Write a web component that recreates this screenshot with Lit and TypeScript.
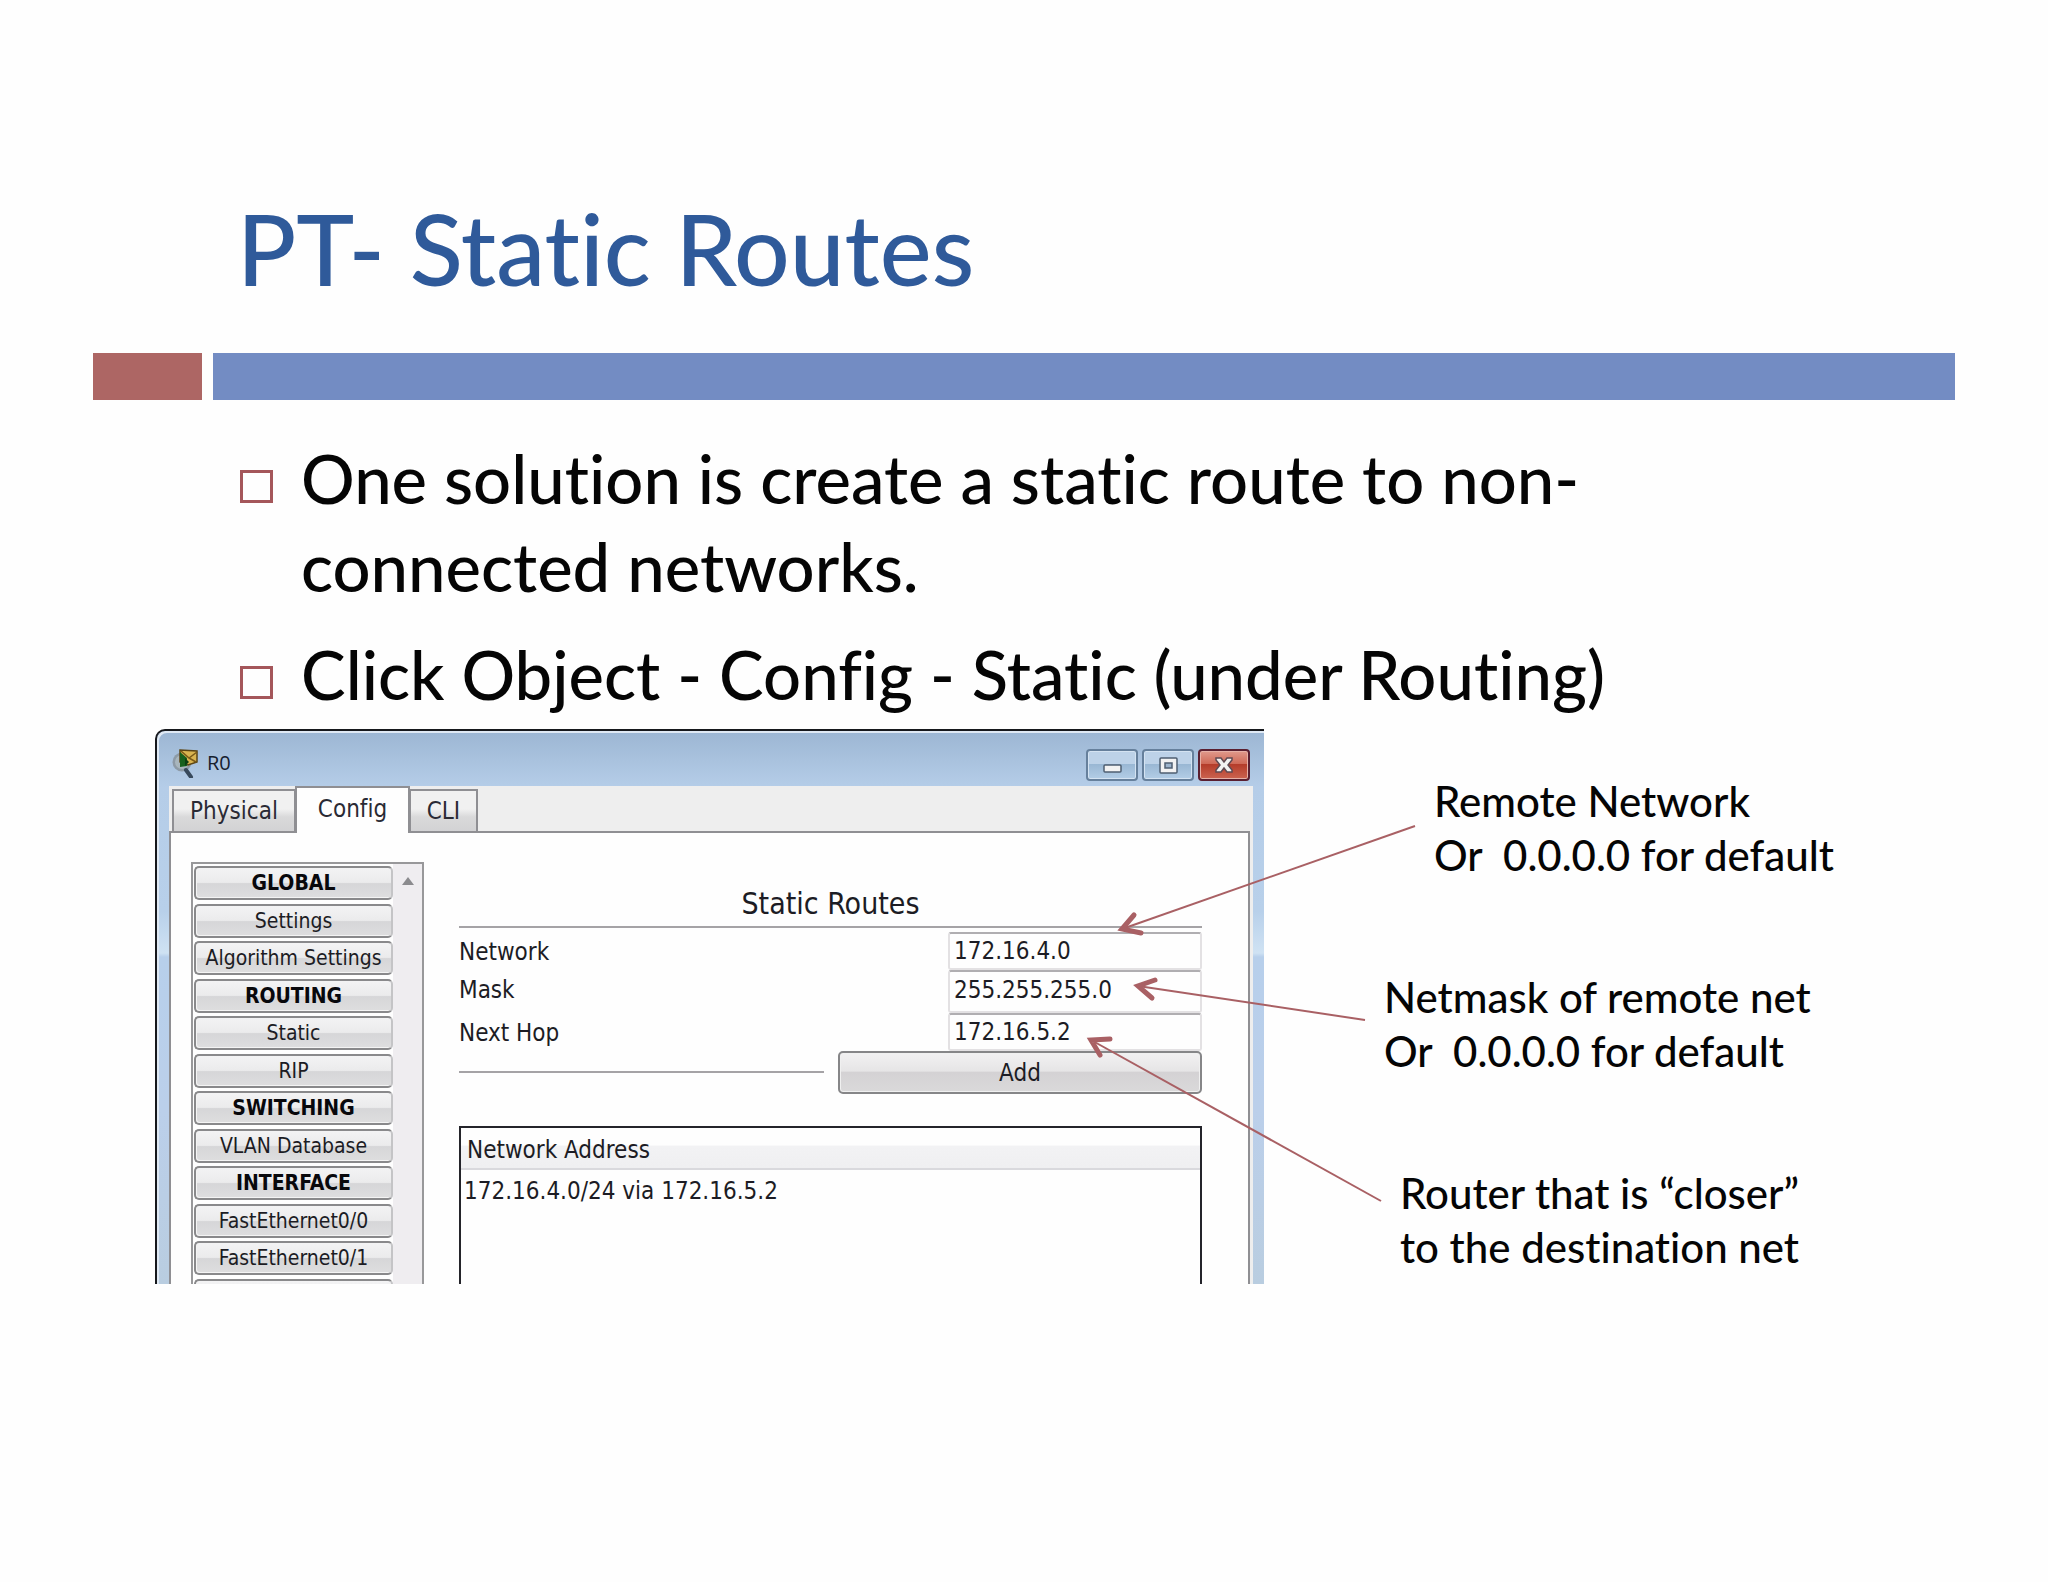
import { LitElement, html, css, svg } from "lit";
import { customElement, state } from "lit/decorators.js";
import { classMap } from "lit/directives/class-map.js";

interface MenuEntry {
  label: string;
  heading?: boolean;
}

const MENU: MenuEntry[] = [
  { label: "GLOBAL", heading: true },
  { label: "Settings" },
  { label: "Algorithm Settings" },
  { label: "ROUTING", heading: true },
  { label: "Static" },
  { label: "RIP" },
  { label: "SWITCHING", heading: true },
  { label: "VLAN Database" },
  { label: "INTERFACE", heading: true },
  { label: "FastEthernet0/0" },
  { label: "FastEthernet0/1" },
  { label: "" },
];

const FIELDS = [
  { id: "network", label: "Network", value: "172.16.4.0" },
  { id: "mask", label: "Mask", value: "255.255.255.0" },
  { id: "next-hop", label: "Next Hop", value: "172.16.5.2" },
];

@customElement("router-window")
export class RouterWindow extends LitElement {
  static styles = css`
    :host {
      display: block;
      min-width: 0;
      font-family: "DejaVu Sans Condensed", "DejaVu Sans", sans-serif;
      font-size: 24px;
      color: #1c1c24;
    }
    * { box-sizing: border-box; }
    button, input { font: inherit; color: inherit; margin: 0; }
    button { padding: 0; }
    .frame {
      height: 100%;
      overflow: hidden;
      display: flex;
      flex-direction: column;
      padding: 0 11px 0 12px;
      border-top: 2px solid #16181c;
      border-left: 2px solid #16181c;
      border-top-left-radius: 10px;
      background: linear-gradient(#9cb6d3 0, #b5cde8 56px, #b8d0ea 180px, #cfe2f3 222px, #b7cfeb 226px, #bbcfea 380px, #b9cde0 100%);
      box-shadow: inset 2px 2px 0 #dfe9f4;
    }
    .titlebar {
      flex: none;
      height: 55px;
      padding: 8px 3px 0 2px;
      display: flex;
      align-items: center;
      gap: 8px;
    }
    .app-icon { width: 28px; height: 30px; }
    .name { flex: 1; font: 20px "Open Sans", sans-serif; color: #16202e; }
    .controls { display: flex; gap: 4px; align-self: flex-start; margin-top: 10px; }
    .control {
      width: 52px;
      height: 32px;
      display: grid;
      place-items: center;
      border: 2px solid #66809c;
      border-radius: 4px;
      background: linear-gradient(#bdd2e8 0 45%, #98b6d3 45%, #b3cde6);
      box-shadow: inset 0 0 0 1px #d4e3f2;
    }
    .control.close {
      border-color: #5a1f30;
      background: linear-gradient(#e09a8c 0, #cf6a58 45%, #b33a28 45%, #cc6450);
      box-shadow: inset 0 0 0 1px #e6b0a6;
    }
    .client { flex: 1; min-height: 0; display: flex; flex-direction: column; background: #eeeeee; }
    .tabs { flex: none; height: 45px; display: flex; align-items: flex-end; padding-left: 3px; }
    .tab {
      height: 42px;
      border: 2px solid #8f8f93;
      border-bottom: 0;
      background: linear-gradient(#f1f1f1 0 45%, #d9d9da 65%, #d2d2d4);
      color: #2a2a34;
    }
    .tab.physical { width: 124px; }
    .tab.cli { width: 69px; }
    .tab.active {
      width: 115px;
      height: 47px;
      margin: 0 -1px -2px;
      padding-bottom: 4px;
      background: #fefefe;
      z-index: 1;
    }
    .pane {
      flex: 1;
      min-height: 0;
      display: flex;
      padding: 29px 46px 0 20px;
      gap: 35px;
      border: 2px solid #8f8f93;
      border-bottom: 0;
      margin-right: 3px;
      background: #fefefe;
    }
    .sidebar {
      flex: none;
      width: 233px;
      display: flex;
      overflow: hidden;
      border: 2px solid #98989a;
      border-bottom: 0;
    }
    .menu {
      flex: 1;
      height: 450px;
      display: grid;
      grid-template-rows: repeat(12, 1fr);
      margin: 2px 0 0 1px;
      font-size: 21px;
    }
    .entry {
      height: 34px;
      border: 2px solid #89898b;
      border-right-color: #c4c4c6;
      border-radius: 5px;
      background: linear-gradient(#f3f3f4 0, #ebebec 48%, #d6d6d8 52%, #dededf);
      box-shadow: inset 1px -1px 0 #f4f4f4;
      line-height: 28px;
      white-space: nowrap;
    }
    .entry.heading { font-weight: bold; color: #08080c; }
    .track { width: 29px; background: #efedf0; display: flex; justify-content: center; padding-top: 13px; }
    .track svg { width: 12px; height: 8px; }
    .content { flex: 1; min-width: 0; display: flex; flex-direction: column; }
    .heading-text {
      margin: 21px 0 0;
      padding: 3px 0 4px;
      font-size: 30px;
      line-height: 36px;
      font-weight: normal;
      text-align: center;
      border-bottom: 2px solid #a5a3a6;
    }
    .form {
      margin-top: 4px;
      display: grid;
      grid-template-columns: 1fr 254px;
      grid-template-rows: 38px 43px 38px;
    }
    .row { display: contents; }
    .row label { line-height: 40px; }
    .field {
      width: 100%;
      height: 38px;
      padding: 0 4px;
      border: 2px solid #e3e1e3;
      border-top-color: #b0aeb1;
      border-radius: 3px;
      background: #fefefe;
    }
    .field.mask { height: 43px; padding-bottom: 3px; }
    .actions { display: flex; align-items: center; gap: 14px; }
    .rule { flex: 1; height: 2px; margin-bottom: 2px; background: #a5a3a6; }
    .add {
      width: 364px;
      height: 43px;
      border: 2px solid #868688;
      border-radius: 5px;
      background: linear-gradient(#f2f1f2 0, #e6e5e6 46%, #d4d2d4 50%, #dad9da);
      box-shadow: inset 0 0 0 1px #f0f0f0;
    }
    .routes { flex: 1; margin-top: 32px; border: 2px solid #24242a; border-bottom: 0; }
    .routes table { width: 100%; border-collapse: collapse; }
    .routes th {
      height: 41px;
      padding: 4px 0 0 6px;
      text-align: left;
      font-weight: normal;
      background: linear-gradient(#fefefe 0 42%, #f2f2f4 46%, #efeff1);
      border-bottom: 2px solid #d9d9dd;
    }
    .routes td { padding: 0 0 0 3px; line-height: 42px; }
  `;

  @state() private tab = "Config";

  private renderTab(name: string, kind: string) {
    const active = this.tab === name;
    return html`<button
      role="tab"
      aria-selected=${active}
      class=${classMap({ tab: true, active, [kind]: true })}
      @click=${() => (this.tab = name)}
    >${name}</button>`;
  }

  render() {
    return html`
      <div class="frame">
        <header class="titlebar">
          <svg class="app-icon" viewBox="0 0 28 30" aria-hidden="true">
            <circle cx="11" cy="14" r="9.5" fill="#8d9aa6" />
            <circle cx="11" cy="14" r="7" fill="#a9b6bd" />
            <path d="M15 22l5 7" stroke="#38495c" stroke-width="4" stroke-linecap="round" />
            <path d="M9 2l17 1v11l-9 3-8-3z" fill="#d9b450" stroke="#5b4515" stroke-width="1.5" />
            <path d="M10 3l8 7 8-6M18 10l7 4" fill="none" stroke="#7a5a18" stroke-width="1.5" />
            <path d="M9 4l7 6v8l-7 1z" fill="#17601d" />
            <path d="M14 10l4 4-4 4z" fill="#0c3d12" />
          </svg>
          <span class="name">R0</span>
          <div class="controls">
            <button class="control" aria-label="Minimize">
              <svg width="20" height="20" viewBox="0 0 20 20">
                <rect x="2" y="10" width="17" height="7" rx="1" fill="#f2f2f2" stroke="#4f5f72" stroke-width="1.5" />
              </svg>
            </button>
            <button class="control" aria-label="Maximize">
              <svg width="20" height="20" viewBox="0 0 20 20">
                <rect x="2" y="3" width="17" height="15" rx="1" fill="#f2f2f2" stroke="#4f5f72" stroke-width="1.5" />
                <rect x="7" y="8" width="7" height="5" fill="#9db4cc" stroke="#4f5f72" stroke-width="1.5" />
              </svg>
            </button>
            <button class="control close" aria-label="Close">
              <svg width="20" height="20" viewBox="0 0 20 20">
                <path d="M2 3h5l3 4 3-4h5v2l-4 5 4 5v2h-5l-3-4-3 4H2v-2l4-5-4-5z" fill="#f2f2f2" stroke="#5f4a52" stroke-width="1.5" />
              </svg>
            </button>
          </div>
        </header>
        <div class="client">
          <div class="tabs" role="tablist">
            ${this.renderTab("Physical", "physical")}
            ${this.renderTab("Config", "config")}
            ${this.renderTab("CLI", "cli")}
          </div>
          <div class="pane">
            <nav class="sidebar">
              <div class="menu">
                ${MENU.map(
                  (m) => html`<button class=${classMap({ entry: true, heading: !!m.heading })}>${m.label}</button>`
                )}
              </div>
              <div class="track">
                <svg viewBox="0 0 12 8" aria-hidden="true"><path d="M6 0l6 8H0z" fill="#8b8b8e" /></svg>
              </div>
            </nav>
            <section class="content">
              <h2 class="heading-text">Static Routes</h2>
              <div class="form">
                ${FIELDS.map(
                  (f) => html`<div class="row">
                    <label for=${f.id}>${f.label}</label>
                    <input id=${f.id} class=${classMap({ field: true, [f.id]: true })} .value=${f.value} />
                  </div>`
                )}
              </div>
              <div class="actions">
                <div class="rule"></div>
                <button class="add">Add</button>
              </div>
              <div class="routes">
                <table>
                  <thead><tr><th scope="col">Network Address</th></tr></thead>
                  <tbody><tr><td>172.16.4.0/24 via 172.16.5.2</td></tr></tbody>
                </table>
              </div>
            </section>
          </div>
        </div>
      </div>
    `;
  }
}

/* Each pointer: start of the shaft, tip, and the two ends of the head. */
const POINTERS = [
  { from: [1260, 97], tip: [967, 200], a: [979, 186], b: [986, 204] },
  { from: [1210, 291], tip: [983, 257], a: [1000, 251], b: [997, 269] },
  { from: [1226, 472], tip: [936, 311], a: [955, 310], b: [945, 326] },
];

@customElement("app-root")
export class AppRoot extends LitElement {
  static styles = css`
    :host {
      display: block;
      min-height: 100vh;
      box-sizing: border-box;
      padding: 188px 93px 0;
      background: #fefefe;
      color: #050505;
      font-family: Lato, sans-serif;
      font-weight: 500;
      font-variant-ligatures: none;
    }
    * { box-sizing: border-box; }
    .title {
      margin: 0;
      padding-left: 144px;
      font-size: 98px;
      line-height: 120px;
      font-weight: 500;
      color: #2f5a9a;
    }
    .bars { display: flex; gap: 11px; height: 47px; margin-top: 45px; }
    .accent { width: 109px; background: #ad6664; }
    .band { flex: 1; background: #738cc3; }
    .points {
      margin: 34px 0 0;
      padding: 0 240px 0 147px;
      list-style: none;
      display: flex;
      flex-direction: column;
      gap: 20px;
      font-size: 67px;
      line-height: 88px;
    }
    .point { display: flex; gap: 28px; }
    .box { flex: none; width: 33px; height: 33px; margin-top: 36px; border: 3px solid #a4565a; }
    .stage {
      position: relative;
      height: 555px;
      margin: 11px 0 0 62px;
      display: grid;
      grid-template-columns: 1109fr 691fr;
      grid-template-rows: 100%;
    }
    .notes {
      display: flex;
      flex-direction: column;
      gap: 88px;
      padding: 45px 0 0 120px;
      font-size: 42px;
      line-height: 54px;
      white-space: nowrap;
    }
    .note { margin: 0; }
    .note.far { padding-left: 50px; }
    .note.near { padding-left: 16px; }
    .pointers { position: absolute; inset: 0; width: 100%; height: 100%; pointer-events: none; }
  `;

  render() {
    return html`
      <h1 class="title">PT- Static Routes</h1>
      <div class="bars"><div class="accent"></div><div class="band"></div></div>
      <ul class="points">
        <li class="point"><span class="box"></span><span>One solution is create a static route to non-connected networks.</span></li>
        <li class="point"><span class="box"></span><span>Click Object - Config - Static (under Routing)</span></li>
      </ul>
      <div class="stage">
        <router-window></router-window>
        <div class="notes">
          <p class="note far">Remote Network<br />Or &nbsp;0.0.0.0 for default</p>
          <p class="note">Netmask of remote net<br />Or &nbsp;0.0.0.0 for default</p>
          <p class="note near">Router that is “closer”<br />to the destination net</p>
        </div>
        <svg class="pointers" viewBox="0 0 1800 555" preserveAspectRatio="none" fill="none" stroke="#a96064" aria-hidden="true">
          ${POINTERS.map(
            (p) => svg`
              <path d="M${p.from} L${p.tip}" stroke-width="2" />
              <path d="M${p.a} L${p.tip} L${p.b}" stroke-width="5" stroke-linecap="round" />`
          )}
        </svg>
      </div>
    `;
  }
}
